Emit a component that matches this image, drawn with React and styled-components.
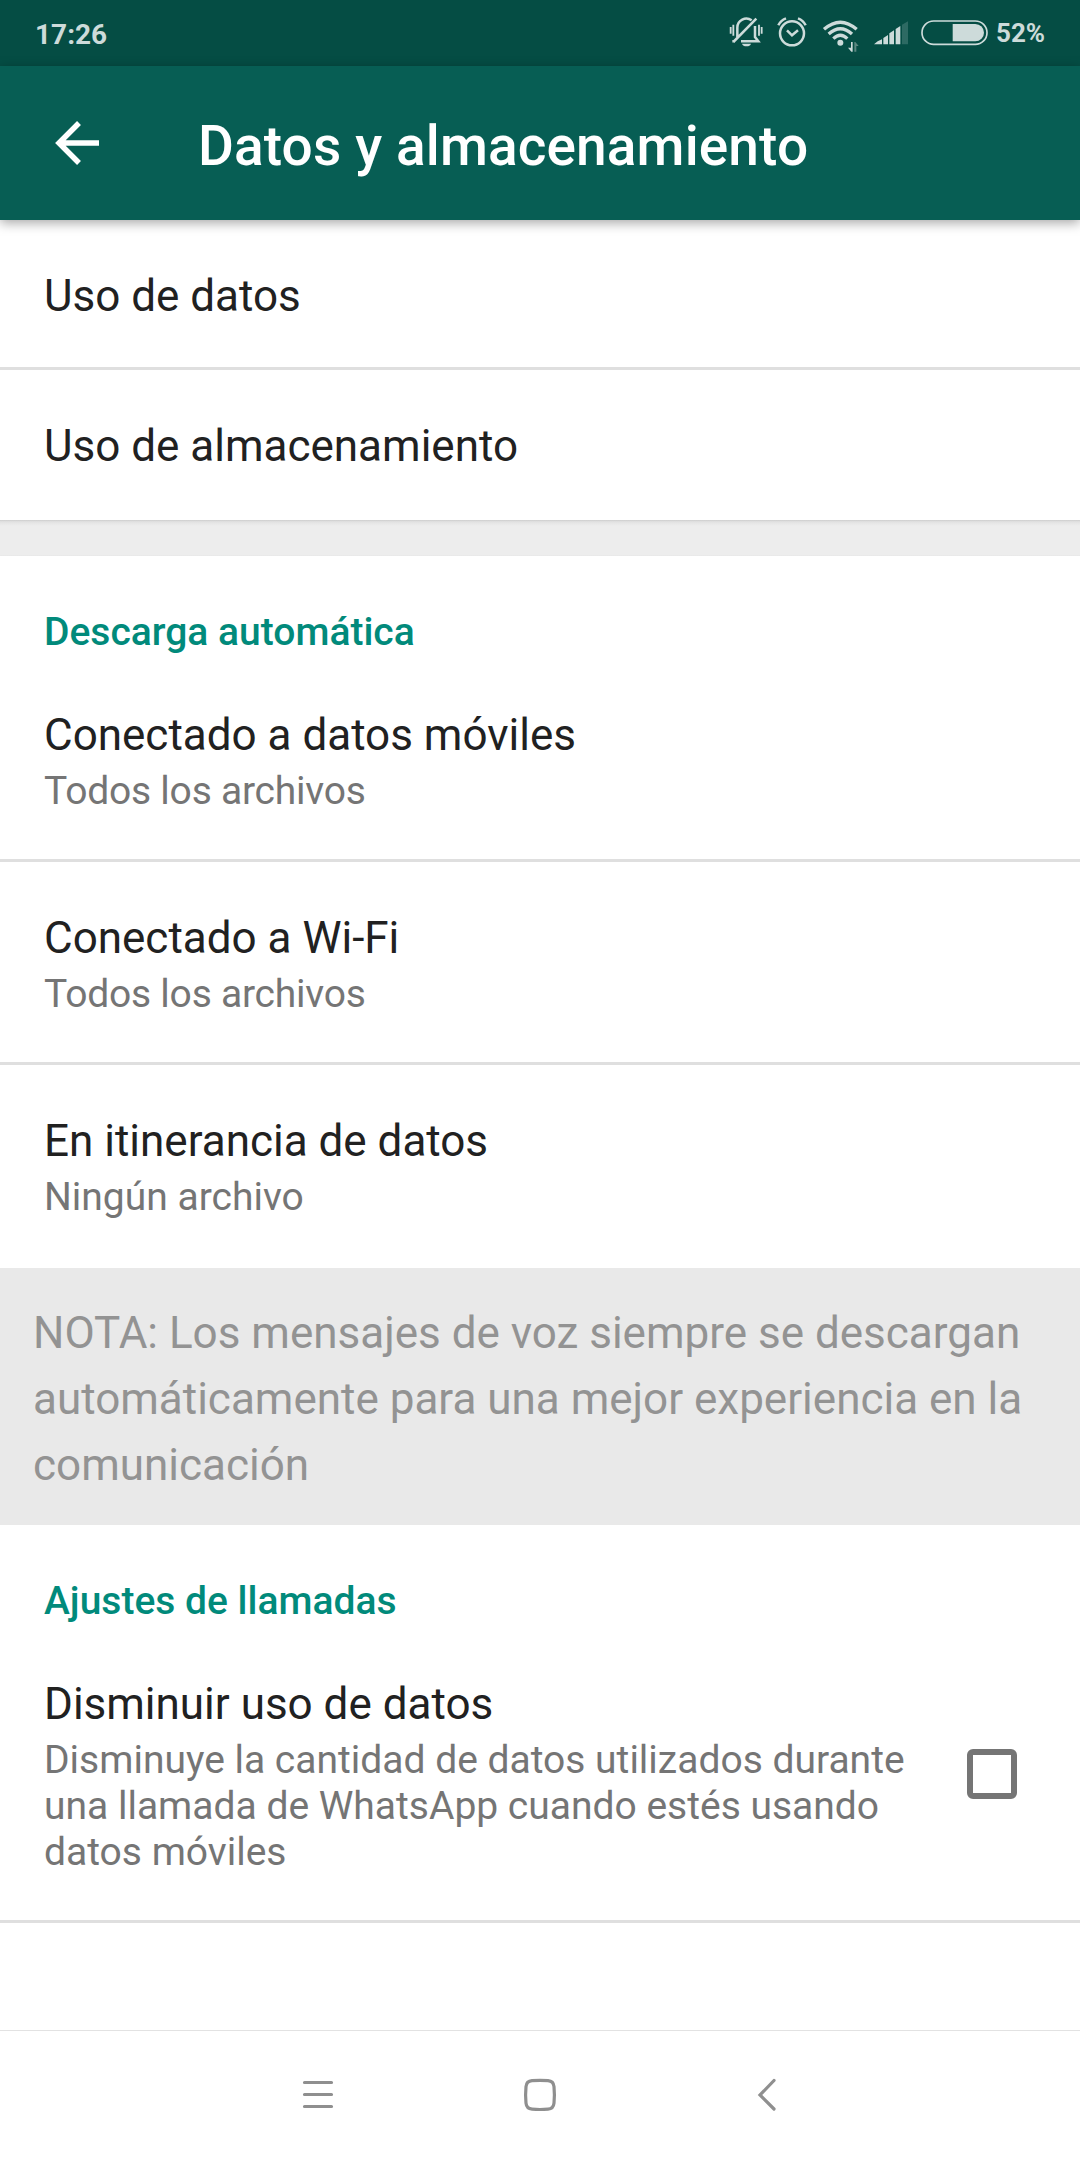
import styled, { createGlobalStyle } from 'styled-components';

const GlobalStyle = createGlobalStyle`
  body {
    margin: 0;
    background: #fff;
    font-family: Roboto, sans-serif;
  }
  * {
    box-sizing: border-box;
  }
`;

const Container = styled.div`
  width: 1080px;
  height: 2160px;
  display: flex;
  flex-direction: column;
  background: #fff;
  overflow: hidden;
`;

const StatusBar = styled.div`
  height: 66px;
  flex-shrink: 0;
  display: flex;
  justify-content: space-between;
  padding: 0 36px 0 35px;
  background: #054d44;
  color: #cddbda;
`;
const Time = styled.span`
  font-size: 28px;
  font-weight: 700;
  line-height: 69px;
`;
const StatusIcons = styled.div`
  display: flex;
  padding-top: 15px;
`;
const StatusIcon = styled.svg`
  display: block;
  width: ${props=>props.width}px;
  height: 40px;
  margin-right: ${props=>props.$gap}px;
`;
const Battery = styled.span`
  width: 48px;
  font-size: 26px;
  font-weight: 700;
  line-height: 36px;
  white-space: nowrap;
`;

const Header = styled.header`
  height: 154px;
  flex-shrink: 0;
  display: flex;
  padding: 54px 0 0 54px;
  background: #075e54;
  box-shadow: 0 3px 11px rgba(0, 0, 0, 0.35);
  z-index: 1;
`;
const BackArrow = styled.svg`
  display: block;
  width: 46px;
  height: 46px;
`;
const Title = styled.h1`
  margin: -6px 0 0 98px;
  font-size: 55px;
  font-weight: 500;
  line-height: 64px;
  letter-spacing: 0.12px;
  color: #fff;
`;

const Item = styled.div`
  height: ${props=>props.$height}px;
  flex-shrink: 0;
  display: flex;
  justify-content: space-between;
  padding: ${props=>props.$top}px 63px 0 44px;
  border-bottom: ${props=>props.$line ? '3px solid #dfdfdf' : 'none'};
`;
const Info = styled.div`
  width: 880px;
`;
const ItemTitle = styled.div`
  font-size: 44px;
  line-height: 52px;
  color: #212121;
`;
const ItemText = styled.div`
  margin-top: 7px;
  font-size: 39px;
  line-height: 46px;
  letter-spacing: ${props=>props.$tight ? '-0.22px' : 'normal'};
  color: #757575;
`;
const SectionTitle = styled.h2`
  height: ${props=>props.$height}px;
  flex-shrink: 0;
  margin: 0;
  padding: 53px 44px 0;
  font-size: 39px;
  font-weight: 500;
  line-height: 46px;
  color: #018a7b;
`;
const Gap = styled.div`
  height: 36px;
  flex-shrink: 0;
  background: linear-gradient(#c9c9c9, #dcdcdc 1px, #e6e6e6 3px, #ededed 6px, #ededed 35px, #e6e6e6);
`;
const Note = styled.p`
  height: 257px;
  flex-shrink: 0;
  margin: 0;
  padding: 32px 33px 0;
  background: #e9e9e9;
  color: #939393;
  font-size: 44px;
  line-height: 66.2px;
`;
const Checkbox = styled.div`
  width: 50px;
  height: 50px;
  margin-top: 71px;
  border: 6px solid #757575;
  border-radius: 6px;
`;

const NavBar = styled.nav`
  height: 130px;
  flex-shrink: 0;
  margin-top: auto;
  padding-bottom: 1px;
  display: flex;
  justify-content: center;
  align-items: center;
  gap: 182px;
  border-top: 1px solid #e2e2e2;
`;
const NavIcon = styled.svg`
  display: block;
  width: 40px;
  height: 40px;
  fill: none;
  stroke: #8f8f8f;
  stroke-width: 3.2;
  stroke-linecap: round;
`;

const App = () => {
  return (
    <Container>
      <GlobalStyle />
      <StatusBar>
        <Time>17:26</Time>
        <StatusIcons>
          <StatusIcon width={34} $gap={14} viewBox='0 0 102 120' fill='none' stroke='#cddbda' strokeWidth='7.5'>
            <path d='M25 66V38a27 27 0 0 1 43-22M78 33v33l10 13H36M82 11L13 81M10 79h8' />
            <path d='M5 36v20M13 29v33M90 29v33M98 36v20' strokeWidth='5.5' />
            <path d='M39 86h27q-3 8-13.500 8T39 86z' fill='#cddbda' stroke='none' />
          </StatusIcon>
          <StatusIcon width={31} $gap={14} viewBox='0 0 93 120' fill='none' stroke='#cddbda' strokeWidth='7.5'>
            <circle cx='45' cy='55' r='36' />
            <path d='M30 46l15 15 18-15' />
            <path d='M4 31q7-15 23-21M86 31q-7-15-23-21' />
          </StatusIcon>
          <StatusIcon width={38} $gap={13} viewBox='0 0 114 120' fill='none' stroke='#cddbda' strokeWidth='10'>
            <path d='M6 43q49-43 98 0M20 57q35-32 70 0M34 71q21-20 42 0' />
            <circle cx='55' cy='83' r='9' fill='#cddbda' stroke='none' />
            <path d='M92 81v29h-4l-10-12h9V81z' fill='#cddbda' stroke='none' />
            <path d='M97 110V81h3l10 12h-7v17z' fill='#5b8780' stroke='none' />
          </StatusIcon>
          <StatusIcon width={36} $gap={11} viewBox='0 0 108 120' fill='#cddbda'>
            <path d='M3 88q10-11 24-15v15zM31 69l14-9v28H31zM49 55l14-9v42H49zM68 42l14-9v55H68z' />
            <path d='M87 29l18-10v69H87z' fill='#2d6a63' />
          </StatusIcon>
          <StatusIcon width={69} $gap={7} viewBox='0 0 207 120' fill='none' stroke='#cddbda' strokeWidth='5'>
            <rect x='6' y='18' width='195' height='70' rx='35' />
            <path d='M98 27h68a26 26 0 0 1 0 52H98z' fill='#cddbda' stroke='none' />
          </StatusIcon>
          <Battery>52%</Battery>
        </StatusIcons>
      </StatusBar>

      <Header>
        <BackArrow viewBox='0 0 46 46' fill='none' stroke='#fff' strokeWidth='5.500'>
          <path d='M45 23H5M25 3L5 23l20 20' />
        </BackArrow>
        <Title>Datos y almacenamiento</Title>
      </Header>

      <Item $height={150} $top={50} $line>
        <ItemTitle>Uso de datos</ItemTitle>
      </Item>
      <Item $height={150} $top={50}>
        <ItemTitle>Uso de almacenamiento</ItemTitle>
      </Item>
      <Gap />

      <SectionTitle $height={109}>Descarga automática</SectionTitle>
      <Item $height={197} $top={44} $line>
        <Info>
          <ItemTitle>Conectado a datos móviles</ItemTitle>
          <ItemText $tight>Todos los archivos</ItemText>
        </Info>
      </Item>
      <Item $height={203} $top={50} $line>
        <Info>
          <ItemTitle>Conectado a Wi-Fi</ItemTitle>
          <ItemText $tight>Todos los archivos</ItemText>
        </Info>
      </Item>
      <Item $height={203} $top={50}>
        <Info>
          <ItemTitle>En itinerancia de datos</ItemTitle>
          <ItemText>Ningún archivo</ItemText>
        </Info>
      </Item>
      <Note>
        NOTA: Los mensajes de voz siempre se descargan automáticamente para una mejor experiencia en la comunicación
      </Note>

      <SectionTitle $height={109}>Ajustes de llamadas</SectionTitle>
      <Item $height={289} $top={44} $line>
        <Info>
          <ItemTitle>Disminuir uso de datos</ItemTitle>
          <ItemText>
            Disminuye la cantidad de datos utilizados durante una llamada de WhatsApp cuando estés usando datos móviles
          </ItemText>
        </Info>
        <Checkbox />
      </Item>

      <NavBar>
        <NavIcon viewBox='0 0 40 40'>
          <path d='M6.500 7.500h27M6.500 19.500h27M6.500 31.500h27' />
        </NavIcon>
        <NavIcon viewBox='0 0 40 40'>
          <path d='M12 5.700q8-.6 16 0 5.500.4 6 6 .8 8 0 16.500-.5 5.500-6 6-8 .6-16 0-5.500-.5-6-6-.8-8.500 0-16.500.5-5.600 6-6z' />
        </NavIcon>
        <NavIcon viewBox='0 0 40 40'>
          <path d='M32 5.500L18 20l14 14' />
        </NavIcon>
      </NavBar>
    </Container>
  )
}

export default App
